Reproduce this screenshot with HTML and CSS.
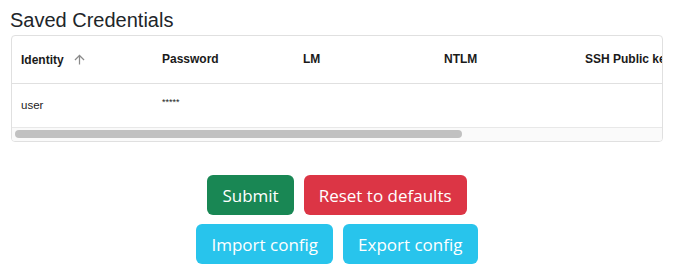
FILE: index.html
```html
<!DOCTYPE html>
<html lang="en">
<head>
    <meta charset="UTF-8">
    <meta name="viewport" content="width=device-width, initial-scale=1.0">
    <title>Saved Credentials</title>
    <link rel="stylesheet" href="styles.css">
</head>
<body>
    <h2 class="section-title">Saved Credentials</h2>
    <div class="grid-box">
        <div class="grid-scroll">
            <table class="cred-table">
                <thead>
                    <tr>
                        <th>Identity
                            <svg class="sort-icon" width="15" height="15" viewBox="0 0 24 24" aria-hidden="true">
                                <path d="M4 12l1.41 1.41L11 7.83V20h2V7.83l5.58 5.59L20 12l-8-8-8 8z" fill="#8a8a8a"/>
                            </svg>
                        </th>
                        <th>Password</th>
                        <th>LM</th>
                        <th>NTLM</th>
                        <th>SSH Public key</th>
                        <th>SSH Private key</th>
                        <th></th>
                    </tr>
                </thead>
                <tbody>
                    <tr>
                        <td>user</td>
                        <td class="masked">*****</td>
                        <td></td>
                        <td></td>
                        <td></td>
                        <td></td>
                        <td></td>
                    </tr>
                </tbody>
            </table>
        </div>
        <!-- horizontal scrollbar of the grid -->
        <div class="scrollbar">
            <div class="scroll-thumb"></div>
        </div>
    </div>

    <div class="actions">
        <div class="btn-row">
            <button class="btn btn-success">Submit</button>
            <button class="btn btn-danger">Reset to defaults</button>
        </div>
        <div class="btn-row">
            <button class="btn btn-info">Import config</button>
            <button class="btn btn-info">Export config</button>
        </div>
    </div>
</body>
</html>
```

FILE: styles.css
```css
* {
    margin: 0;
    padding: 0;
    box-sizing: border-box;
}

body {
    background: #fff;
    color: #212529;
    font-family: "Liberation Sans", Arial, sans-serif;
    padding: 8px 10px 0 11px;
}

.section-title {
    font-size: 20px;
    font-weight: 400;
    line-height: 24px;
    margin-left: -1px;
    margin-bottom: 3px;
}

.grid-box {
    width: 652px;
    border: 1px solid #e0e0e0;
    border-radius: 4px;
    overflow: hidden;
}

.grid-scroll {
    overflow: hidden;
}

.scrollbar {
    height: 14px;
    background: #fafafa;
    border-top: 1px solid #e8e8e8;
    padding: 2px 3px;
}

.scroll-thumb {
    width: 447px;
    height: 8px;
    background: #c1c1c1;
    border-radius: 4px;
}

.cred-table {
    width: 950px;
    border-collapse: collapse;
    table-layout: fixed;
    font-size: 11.5px;
}

.cred-table th,
.cred-table td {
    width: 141px;
    text-align: left;
    padding: 0 9px;
    white-space: nowrap;
    overflow: hidden;
}

.cred-table th {
    height: 47px;
    font-size: 12px;
    font-weight: 700;
    color: #1a1a1a;
    border-bottom: 1px solid #e0e0e0;
}

.cred-table td {
    height: 44px;
    color: #222;
}

.masked {
    font-size: 9px;
    vertical-align: middle;
    padding-bottom: 6px !important;
}

.sort-icon {
    vertical-align: -3px;
    margin-left: 5px;
}

.actions {
    display: flex;
    flex-direction: column;
    align-items: center;
    gap: 9px;
    margin-top: 33px;
}

.btn-row {
    display: flex;
    gap: 10px;
}

.btn {
    font-family: "Open Sans", sans-serif;
    font-size: 17px;
    color: #fff;
    border: none;
    border-radius: 6px;
    height: 40px;
    padding: 0 15px;
    cursor: pointer;
}

.btn-success {
    background: #198754;
}

.btn-danger {
    background: #dc3545;
}

.btn-info {
    background: #28c4ec;
}
```
